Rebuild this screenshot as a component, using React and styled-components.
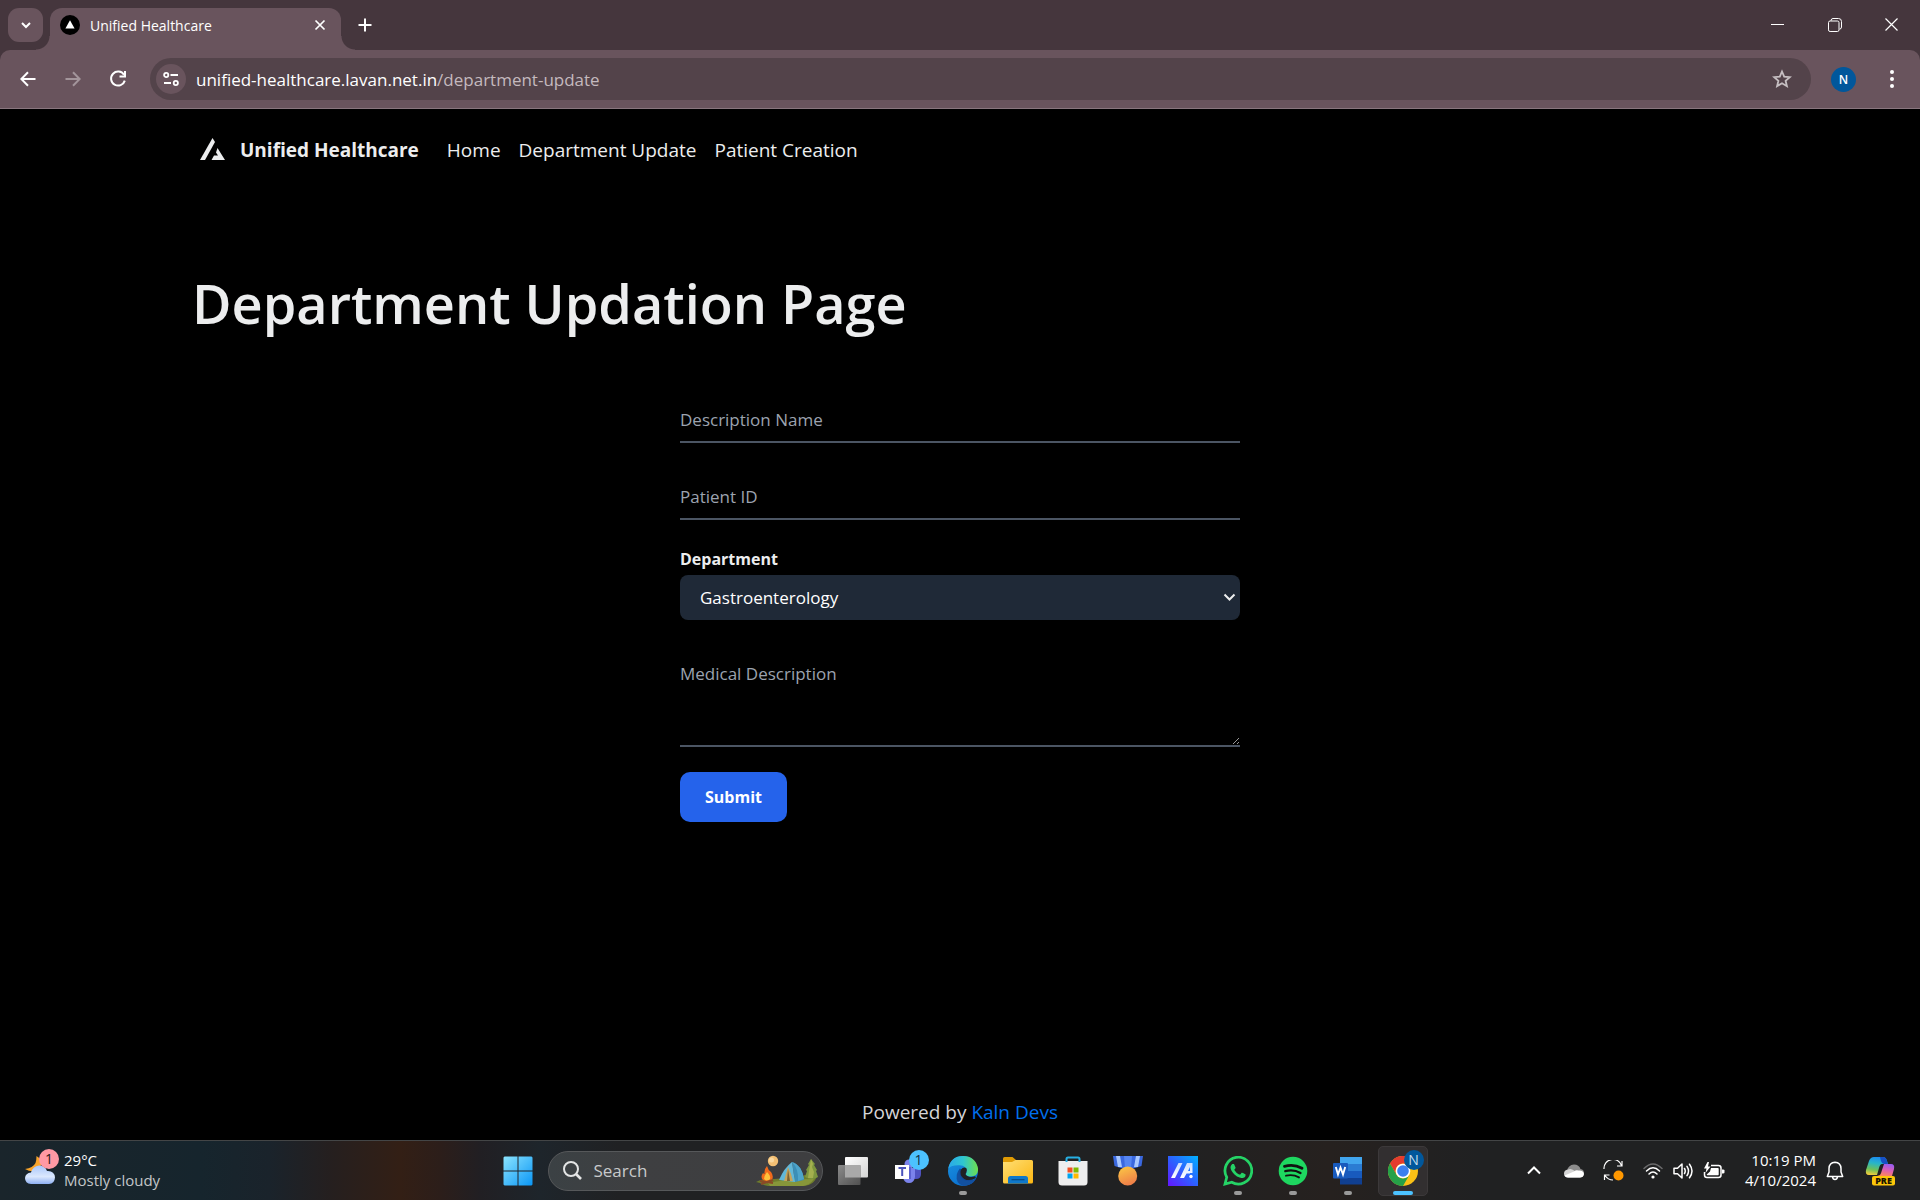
import React from "react";
import styled, { createGlobalStyle } from "styled-components";

const GlobalStyle = createGlobalStyle`
  *, *::before, *::after { box-sizing: border-box; }
  body {
    margin: 0;
    background: #000;
    color: #ecedee;
    font-family: "Open Sans", "Noto Sans", sans-serif;
    font-size: 17px;
  }
  button, input, select, textarea { font: inherit; color: inherit; }
  svg { display: block; flex: none; }
`;

const Desktop = styled.div`
  min-height: 100vh;
  display: flex;
  flex-direction: column;
`;

const IconButton = styled.button`
  display: grid;
  place-items: center;
  width: ${(p) => p.$width || 30}px;
  height: ${(p) => p.$height || 30}px;
  flex: none;
  padding: 0;
  border: 0;
  border-radius: ${(p) => p.$radius || 0}px;
  background: ${(p) => p.$background || "transparent"};
  color: ${(p) => p.$color || "#fff"};
`;

/* Browser frame */

const TabStrip = styled.div`
  display: flex;
  align-items: flex-end;
  height: 50px;
  padding-left: 8px;
  background: #45363d;
`;

const TabSearch = styled(IconButton)`
  margin-bottom: 8px;
`;

const Tab = styled.div`
  position: relative;
  display: flex;
  align-items: center;
  width: 291px;
  height: 42px;
  margin-left: 7px;
  padding: 0 11px 8px 10px;
  border-radius: 12px 12px 0 0;
  background: #69545d;
  color: #fff;
  font-size: 14px;

  &::before, &::after {
    content: "";
    position: absolute;
    bottom: 0;
    width: 14px;
    height: 14px;
  }
  &::before {
    right: 100%;
    background: radial-gradient(circle at 0 0, transparent 13px, #69545d 14px);
  }
  &::after {
    left: 100%;
    background: radial-gradient(circle at 100% 0, transparent 13px, #69545d 14px);
  }
`;

const TabTitle = styled.span`
  flex: 1;
  margin-left: 10px;
`;

const NewTab = styled(IconButton)`
  margin: 0 0 10px 9px;
`;

const WindowControls = styled.div`
  display: flex;
  align-self: stretch;
  margin-left: auto;
`;

const ToolbarBack = styled.div`
  background: #45363d;
`;

const Toolbar = styled.div`
  display: flex;
  align-items: center;
  gap: 15px;
  height: 59px;
  padding: 0 13px;
  border-bottom: 1px solid #89767e;
  border-radius: 10px 10px 0 0;
  background: #69545d;
`;

const AddressBar = styled.div`
  display: flex;
  flex: 1;
  align-items: center;
  height: 42px;
  margin-left: 2px;
  padding: 0 14px 0 6px;
  border-radius: 21px;
  background: #53434a;
`;

const Address = styled.span`
  flex: 1;
  margin-left: 10px;
  color: #fff;
  font-size: 17px;
`;

const AddressPath = styled.span`
  color: #c4b9be;
`;

const Avatar = styled(IconButton)`
  margin: 0 6px 0 5px;
  font-size: 12px;
  font-weight: 600;
`;

/* Web page */

const Page = styled.div`
  display: flex;
  flex: 1;
  flex-direction: column;
`;

const Container = styled.div`
  width: 100%;
  max-width: 1600px;
  margin: 0 auto;
  padding: 0 32px;
`;

const Nav = styled.nav`
  display: flex;
  align-items: center;
  height: 82px;
  padding-left: 8px;
  font-size: 19px;
`;

const Brand = styled.a`
  display: flex;
  align-items: center;
  gap: 15px;
  margin-right: 28px;
  color: inherit;
  font-weight: 700;
  text-decoration: none;
`;

const NavLinks = styled.div`
  display: flex;
  gap: 18px;
`;

const NavLink = styled.a`
  color: inherit;
  text-decoration: none;
`;

const Title = styled.h1`
  margin: 74px 0 58px;
  font-size: 54px;
  font-weight: 600;
  line-height: 76px;
`;

const Form = styled.form`
  display: flex;
  flex-direction: column;
  align-items: flex-start;
  max-width: 560px;
  margin: 0 auto;
`;

const Field = styled.div`
  display: grid;
  width: 100%;
  margin-bottom: ${(p) => p.$gap}px;
`;

const FloatingLabel = styled.label`
  grid-area: 1 / 1;
  line-height: 42px;
  color: #9ca3af;
  pointer-events: none;
  font-size: 17px;
`;

const TextInput = styled.input`
  grid-area: 1 / 1;
  width: 100%;
  height: ${(p) => p.$height || 44}px;
  padding: 0;
  border: 0;
  border-bottom: 2px solid #4b5563;
  border-radius: 0;
  outline: 0;
  background: transparent;
`;

const TextArea = styled(TextInput)`
  resize: vertical;
`;

const FieldLabel = styled.label`
  margin-bottom: 4px;
  font-size: 16px;
  font-weight: 700;
  line-height: 24px;
`;

const SelectBox = styled.div`
  display: grid;
  align-items: center;

  & > * { grid-area: 1 / 1; }
  & > svg { justify-self: end; margin-right: 4px; pointer-events: none; }
`;

const Select = styled.select`
  width: 100%;
  height: 45px;
  padding: 0 20px;
  border: 0;
  border-radius: 8px;
  appearance: none;
  background: #1f2937;
  color: #fff;
`;

const Submit = styled.button`
  height: 50px;
  padding: 0 25px;
  border: 0;
  border-radius: 10px;
  background: #2563eb;
  color: #fff;
  font-size: 16px;
  font-weight: 700;
`;

const Footer = styled.footer`
  margin-top: auto;
  padding-bottom: 12px;
  color: #d4d4d8;
  font-size: 19px;
  line-height: 32px;
  text-align: center;
`;

const FooterLink = styled.a`
  color: #006fee;
  text-decoration: none;
`;

/* Taskbar */

const Taskbar = styled.div`
  display: grid;
  grid-template-columns: 1fr auto 1fr;
  align-items: center;
  height: 60px;
  border-top: 1px solid #434546;
  background: linear-gradient(90deg, #1a252b 0, #16252d 200px, #1a232b 270px, #251f1f 330px, #331f15 400px, #2c1e1a 440px, #211f23 480px, #1e252b 540px, #202123 620px, #202122 1150px, #26211f 1330px, #202122 1480px);
  color: #fff;
`;

const Weather = styled.button`
  display: flex;
  align-items: center;
  gap: 9px;
  padding: 0 0 0 25px;
  border: 0;
  background: none;
  font-size: 15px;
  line-height: 20px;
  text-align: left;
`;

const WeatherText = styled.span`
  display: flex;
  flex-direction: column;
  padding-bottom: 2px;
`;

const Muted = styled.span`
  color: #c3c6c8;
`;

const Apps = styled.div`
  display: flex;
  align-items: center;
  gap: 5px;
`;

const AppButton = styled.button`
  position: relative;
  display: grid;
  place-items: center;
  width: 50px;
  height: 50px;
  padding: 0;
  border: 1px solid ${(p) => (p.$active ? "#3c393a" : "transparent")};
  border-radius: 5px;
  background: ${(p) => (p.$active ? "#322f30" : "transparent")};

  &::after {
    content: "";
    position: absolute;
    bottom: 0;
    left: 50%;
    display: ${(p) => (p.$open || p.$active ? "block" : "none")};
    width: ${(p) => (p.$active ? 20 : 8)}px;
    height: 4px;
    border-radius: 2px;
    background: ${(p) => (p.$active ? "#4cc2ff" : "#9a9a9a")};
    translate: -50% 0;
  }
`;

const Badge = styled.span`
  position: absolute;
  top: ${(p) => p.$top}px;
  right: ${(p) => p.$right}px;
  display: grid;
  place-items: center;
  width: 20px;
  height: 20px;
  border-radius: 50%;
  background: ${(p) => p.$background};
  color: ${(p) => p.$color};
  font-size: 14px;
  line-height: 20px;
`;

const SearchBox = styled.label`
  display: flex;
  align-items: center;
  width: 275px;
  height: 40px;
  padding: 0 4px 0 14px;
  border: 1px solid #56585a;
  border-radius: 20px;
  background: linear-gradient(90deg, #3b4144, #3e3f41 30%, #3e3e40);
`;

const SearchInput = styled.input`
  flex: 1;
  min-width: 0;
  margin-left: 12px;
  padding: 0;
  border: 0;
  outline: 0;
  background: none;
  color: #c8cacb;

  &::placeholder { color: #c8cacb; opacity: 1; }
`;

const WeatherIcon = styled.span`
  position: relative;
`;

const Tray = styled.div`
  display: flex;
  align-items: center;
  justify-content: flex-end;
  padding-right: 4px;
`;

const QuickSettings = styled.button`
  display: flex;
  align-items: center;
  gap: 10px;
  margin: 0 20px 0 10px;
  padding: 0;
  border: 0;
  background: none;
`;

const Clock = styled.button`
  margin-right: 10px;
  padding: 0 0 2px;
  border: 0;
  background: none;
  font-size: 15px;
  line-height: 20px;
  text-align: right;
`;

const Line = styled.span`
  display: block;
`;

function Stroke({ w, h, d, width = 2, children }) {
  return (
    <svg width={w} height={h} viewBox={`0 0 ${w} ${h}`} fill="none" stroke="currentColor" strokeWidth={width} aria-hidden="true">
      {d && <path d={d} />}
      {children}
    </svg>
  );
}

function Browser() {
  return (
    <header>
      <TabStrip>
        <TabSearch $width={35} $height={34} $radius={11} $background="#69545d" aria-label="Search tabs">
          <Stroke w={12} h={8} d="M2 2L6 6L10 2" />
        </TabSearch>
        <Tab>
          <svg width="20" height="20" viewBox="0 0 20 20" aria-hidden="true">
            <circle cx="10" cy="10" r="10" fill="#000" />
            <path d="M10 5.2L14.6 13.6H5.4Z" fill="#fff" />
          </svg>
          <TabTitle>Unified Healthcare</TabTitle>
          <IconButton $width={20} $height={20} aria-label="Close tab">
            <Stroke w={12} h={12} d="M1.5 1.5L10.5 10.5M10.5 1.5L1.5 10.5" width={1.7} />
          </IconButton>
        </Tab>
        <NewTab aria-label="New tab">
          <Stroke w={14} h={14} d="M7 .5V13.5M.5 7H13.5" />
        </NewTab>
        <WindowControls>
          <IconButton $width={57} $height={49} aria-label="Minimize">
            <Stroke w={13} h={13} d="M0 6.5H13" width={1} />
          </IconButton>
          <IconButton $width={57} $height={49} aria-label="Restore">
            <Stroke w={14} h={14} width={1}>
              <rect x=".5" y="3" width="10.5" height="10.5" rx="1.6" />
              <path d="M3 3V2.500Q3.200 .5 5 .5H10.500Q13.500 .5 13.500 3.500V9Q13.500 11 11.500 11.200" />
            </Stroke>
          </IconButton>
          <IconButton $width={57} $height={49} aria-label="Close">
            <Stroke w={13} h={13} d="M.5 .5L12.5 12.5M12.5 .5L.5 12.5" width={1.2} />
          </IconButton>
        </WindowControls>
      </TabStrip>
      <ToolbarBack>
        <Toolbar>
          <IconButton aria-label="Back">
            <Stroke w={16} h={16} d="M15.500 8H1.500M8 1.200L1.300 8L8 14.800" />
          </IconButton>
          <IconButton $color="#a3959b" aria-label="Forward">
            <Stroke w={16} h={16} d="M.5 8H14.500M8 1.200L14.700 8L8 14.800" />
          </IconButton>
          <IconButton aria-label="Reload">
            <Stroke w={18} h={18} d="M15 4.800A7 7 0 1 0 15.800 10.600M16 1V6.500H10.500" />
          </IconButton>
          <AddressBar>
            <IconButton $radius={15} $background="#69545d" aria-label="Site information">
              <Stroke w={16} h={14} width={1.800}>
                <circle cx="3.200" cy="3" r="2.100" />
                <path d="M7.500 3H15M1 11H8" />
                <circle cx="12.800" cy="11" r="2.100" />
              </Stroke>
            </IconButton>
            <Address>
              unified-healthcare.lavan.net.in<AddressPath>/department-update</AddressPath>
            </Address>
            <IconButton $color="#c6bfc2" aria-label="Bookmark">
              <Stroke w={20} h={20} d="M10 2.500L12.200 7.600L17.800 8.100L13.600 11.800L14.900 17.200L10 14.300L5.100 17.200L6.400 11.800L2.200 8.100L7.800 7.600Z" width={1.800} />
            </IconButton>
          </AddressBar>
          <Avatar $width={25} $height={25} $radius={13} $background="#01579b" aria-label="Profile N">N</Avatar>
          <IconButton aria-label="Menu">
            <svg width="4" height="18" viewBox="0 0 4 18" fill="#fff" aria-hidden="true">
              <circle cx="2" cy="2" r="2" />
              <circle cx="2" cy="9" r="2" />
              <circle cx="2" cy="16" r="2" />
            </svg>
          </IconButton>
        </Toolbar>
      </ToolbarBack>
    </header>
  );
}

function DepartmentPage() {
  return (
    <Page>
      <Container>
        <Nav>
          <Brand href="#home">
            <svg width="25" height="24" viewBox="0 0 25 24" fill="currentColor" aria-hidden="true">
              <path d="M12.500 0L15 4L5 22H0Z" />
              <path d="M17.500 10L25 22H11.500L14 17.500H18L16 14.500Z" />
            </svg>
            Unified Healthcare
          </Brand>
          <NavLinks>
            <NavLink href="#home">Home</NavLink>
            <NavLink href="#department-update">Department Update</NavLink>
            <NavLink href="#patient-creation">Patient Creation</NavLink>
          </NavLinks>
        </Nav>
        <Title>Department Updation Page</Title>
        <Form onSubmit={(e) => e.preventDefault()}>
          <Field $gap={33}>
            <TextInput id="description-name" />
            <FloatingLabel htmlFor="description-name">Description Name</FloatingLabel>
          </Field>
          <Field $gap={27}>
            <TextInput id="patient-id" />
            <FloatingLabel htmlFor="patient-id">Patient ID</FloatingLabel>
          </Field>
          <Field $gap={33}>
            <FieldLabel htmlFor="department">Department</FieldLabel>
            <SelectBox>
              <Select id="department" defaultValue="Gastroenterology">
                <option>Gastroenterology</option>
              </Select>
              <Stroke w={13} h={9} d="M1.500 1.500L6.500 6.500L11.500 1.500" />
            </SelectBox>
          </Field>
          <Field $gap={25}>
            <TextArea as="textarea" id="medical-description" $height={94} />
            <FloatingLabel htmlFor="medical-description">Medical Description</FloatingLabel>
          </Field>
          <Submit type="submit">Submit</Submit>
        </Form>
      </Container>
      <Footer>
        Powered by <FooterLink href="#kaln-devs">Kaln Devs</FooterLink>
      </Footer>
    </Page>
  );
}

const StartIcon = () => (
  <svg width="30" height="30" viewBox="0 0 30 30" aria-hidden="true">
    <defs>
      <linearGradient id="start" x1="0" y1="0" x2="1" y2="1" gradientUnits="objectBoundingBox">
        <stop offset="0" stopColor="#8be4ff" />
        <stop offset="1" stopColor="#0a96f5" />
      </linearGradient>
    </defs>
    <path fill="url(#start)" d="M1.500 .5H14.500V14.500H.5V1.500ZM15.500 .5H28.500L29.500 1.500V14.500H15.500ZM.5 15.500H14.500V29.500H1.500L.5 28.500ZM15.500 15.500H29.500V28.500L28.500 29.500H15.500Z" />
  </svg>
);

const CampIcon = () => (
  <svg width="62" height="32" viewBox="0 0 62 32" aria-hidden="true">
    <path d="M0 27Q8 23 18 24L44 22Q54 17 61 19Q60 30 47 31H12Q6 30 4 28Z" fill="#6f7d2c" />
    <path d="M12 28Q30 24 58 24Q54 30 47 31H14Z" fill="#87963a" />
    <circle cx="17" cy="6" r="5.200" fill="#f4c074" />
    <circle cx="15.500" cy="5" r="2.500" fill="#fbd9a0" />
    <path d="M55 4L59 9L58 10L61 15L60 16L62 22Q56 26 49 22L51 16L50 15L53 10L52 9Z" fill="#7d963e" />
    <path d="M55 4L57 9L56 12L58 17L57 23H52L53 16Z" fill="#a4b04e" />
    <path d="M36 7Q45 9 48 25L39 27Z" fill="#3b8fb8" />
    <path d="M36 7Q28 13 23 25L39 27Z" fill="#62b7d8" />
    <path d="M36 7Q43 14 42 26L48 24Q46 10 36 7Z" fill="#4ea4ca" />
    <path d="M32 12L28 26H37Q35 18 32 12Z" fill="#c7a45b" />
    <path d="M32 14L31 26H34Z" fill="#7c6131" />
    <path d="M11 11Q12 15 15 17Q18 21 16 25Q12 28 7 25Q4 22 7 18Q8 19 8.500 19Q8 14 11 11Z" fill="#f26a1b" />
    <path d="M11 17Q15 21 14 24Q11 27 8 24Q8 21 11 17Z" fill="#ffc23b" />
    <path d="M4 26L17 28M5 29L17 25" stroke="#8a4a26" strokeWidth="2" />
  </svg>
);

const TaskViewIcon = () => (
  <svg width="30" height="28" viewBox="0 0 30 28" aria-hidden="true">
    <defs>
      <linearGradient id="tv1" x1="0" y1="0" x2="1" y2="1"><stop stopColor="#fff" /><stop offset="1" stopColor="#d4d4d4" /></linearGradient>
      <linearGradient id="tv2" x1="0" y1="0" x2="1" y2="1"><stop stopColor="#8b8b8b" /><stop offset="1" stopColor="#505050" /></linearGradient>
    </defs>
    <rect x="7" y="0" width="23" height="20.500" rx="1" fill="url(#tv1)" />
    <rect x="0" y="8" width="22.500" height="20" rx="1" fill="url(#tv2)" />
    <rect x="7" y="8" width="15.500" height="12.500" fill="#a9a9a9" />
  </svg>
);

const TeamsIcon = () => (
  <svg width="30" height="30" viewBox="0 0 30 30" aria-hidden="true">
    <circle cx="16" cy="8" r="4.500" fill="#7b83eb" />
    <path d="M19 12H28V18Q28 23 23 23H19Z" fill="#4e52c0" />
    <path d="M10 12H22V21Q21 27 16 27Q11 27 10 21Z" fill="#7b83eb" />
    <path d="M11 11H18V23H11Z" fill="#5a60cf" />
    <rect x="2" y="9" width="14" height="14" fill="#fff" />
    <path d="M5.500 12H13M9.200 12V20" stroke="#4b53bc" strokeWidth="2" />
  </svg>
);

const EdgeIcon = () => (
  <svg width="30" height="30" viewBox="0 0 24 24" aria-hidden="true">
    <defs>
      <linearGradient id="e1" x1="0" y1=".3" x2="1" y2=".3"><stop stopColor="#2aa8ea" /><stop offset=".5" stopColor="#2fc6d0" /><stop offset="1" stopColor="#6ee04b" /></linearGradient>
      <linearGradient id="e2" x1="0" y1="0" x2=".6" y2="1"><stop stopColor="#1b93e0" /><stop offset="1" stopColor="#0a6fcf" /></linearGradient>
    </defs>
    <circle cx="12" cy="12" r="12" fill="url(#e2)" />
    <path d="M.3 10Q2 0 12 0Q22 0 24 10Q24.500 16.500 17.500 16.300Q13.500 16 14.600 13.600Q16 8 9.500 7.400Q3 7 .3 10Z" fill="url(#e1)" />
    <path d="M9.500 10Q6 14 9 19Q13 25 19 22Q21 20.500 22.300 18.300Q18 20.300 14 18.200Q10 16 11 11Z" fill="#114a9b" />
    <path d="M14.600 9.500Q12 8.500 10.300 11Q8.700 15.500 13 18.300Q17 20.500 22 17.800Q22.800 16.500 21.500 16.200Q18 17.500 15.500 16Q13.200 14.800 14.600 13.300Q15.700 11 14.600 9.500Z" fill="#202123" />
    <path d="M9.500 11Q8 17 13.500 19.500Q18 21 22.300 18Q19 24 12 24Q6 22 7 15Q7.500 12 9.500 11Z" fill="#12509f" />
  </svg>
);

const FolderIcon = () => (
  <svg width="30" height="27" viewBox="0 0 30 27" aria-hidden="true">
    <defs>
      <linearGradient id="f1" x1="0" y1="0" x2="1" y2="1"><stop stopColor="#ffdf75" /><stop offset="1" stopColor="#fbb612" /></linearGradient>
    </defs>
    <path d="M0 1.500Q0 0 1.500 0H9.500L13 3V9H0Z" fill="#e09b04" />
    <path d="M0 5H9L12.500 3H28.500Q30 3 30 4.500V25Q30 26.500 28.500 26.500H1.500Q0 26.500 0 25Z" fill="url(#f1)" />
    <path d="M5 26.500V21.500Q5 19 7.500 19H22.500Q25 19 25 21.500V26.500Z" fill="#0f78ca" />
    <path d="M8.500 22.700H21.500" stroke="#094a83" strokeWidth="1.200" />
  </svg>
);

const StoreIcon = () => (
  <svg width="30" height="30" viewBox="0 0 30 30" aria-hidden="true">
    <path d="M8.500 6V3Q8.500 1.500 10 1.500H20Q21.500 1.500 21.500 3V6" fill="none" stroke="#27b0e3" strokeWidth="2" />
    <path d="M.5 5H29.500V26Q29.500 29.500 26 29.500H4Q.5 29.500 .5 26Z" fill="#eee" />
    <path d="M8.500 5V6M21.500 5V6" stroke="#27b0e3" strokeWidth="2" />
    <path d="M9.500 11.500H14.500V16.500H9.500Z" fill="#f25022" />
    <path d="M15.500 11.500H20.500V16.500H15.500Z" fill="#7fba00" />
    <path d="M9.500 17.500H14.500V22.500H9.500Z" fill="#00a4ef" />
    <path d="M15.500 17.500H20.500V22.500H15.500Z" fill="#ffb900" />
  </svg>
);

const MedalIcon = () => (
  <svg width="30" height="30" viewBox="0 0 30 30" aria-hidden="true">
    <defs>
      <linearGradient id="m1" x1="0" y1="0" x2=".4" y2="1"><stop stopColor="#fccb45" /><stop offset="1" stopColor="#ef8148" /></linearGradient>
    </defs>
    <path d="M0 0H30L28.500 10L19 13H11L1.500 10Z" fill="#3a68df" />
    <path d="M3 0H7L9 11L5 11Z" fill="#a9c8ff" />
    <path d="M27 0H23L21 11L25 11Z" fill="#a9c8ff" />
    <path d="M11 0H19L18 12H12Z" fill="#5686f2" />
    <circle cx="14.700" cy="20" r="9.500" fill="url(#m1)" />
  </svg>
);

const ArmouryIcon = () => (
  <svg width="30" height="30" viewBox="0 0 30 30" aria-hidden="true">
    <defs>
      <linearGradient id="a1" x1="0" y1="1" x2="1" y2="0"><stop stopColor="#6415ff" /><stop offset=".5" stopColor="#2c61ff" /><stop offset="1" stopColor="#00b2ff" /></linearGradient>
      <linearGradient id="a2" x1="0" y1="1" x2="0" y2="0"><stop stopColor="#fff" /><stop offset="1" stopColor="#c9dcff" /></linearGradient>
    </defs>
    <rect width="30" height="30" fill="url(#a1)" />
    <path d="M10.500 7H14.500L7 22H3ZM19 7H24.500V17H22V11L20 15H22V17.500H18.500L16 22H12Z" fill="url(#a2)" />
    <circle cx="23" cy="20.500" r="1.700" fill="#fff" />
  </svg>
);

const WhatsAppIcon = () => (
  <svg width="30" height="30" viewBox="0 0 24 24" fill="#25d366" aria-hidden="true">
    <path d="M17.472 14.382c-.297-.149-1.758-.867-2.030-.967-.273-.099-.471-.148-.670.150-.197.297-.767.966-.940 1.164-.173.199-.347.223-.644.075-.297-.150-1.255-.463-2.390-1.475-.883-.788-1.480-1.761-1.653-2.059-.173-.297-.018-.458.130-.606.134-.133.298-.347.446-.520.149-.174.198-.298.298-.497.099-.198.050-.371-.025-.520-.075-.149-.669-1.612-.916-2.207-.242-.579-.487-.500-.669-.510-.173-.008-.371-.010-.570-.010-.198 0-.520.074-.792.372-.272.297-1.040 1.016-1.040 2.479 0 1.462 1.065 2.875 1.213 3.074.149.198 2.096 3.200 5.077 4.487.709.306 1.262.489 1.694.625.712.227 1.360.195 1.871.118.571-.085 1.758-.719 2.006-1.413.248-.694.248-1.289.173-1.413-.074-.124-.272-.198-.570-.347" />
    <path fill="none" stroke="#25d366" strokeWidth="2.200" d="M1.600 22.400L3 17A10.700 10.700 0 1 1 7 21Z" />
  </svg>
);

const SpotifyIcon = () => (
  <svg width="30" height="30" viewBox="0 0 30 30" aria-hidden="true">
    <circle cx="15" cy="15" r="14.300" fill="#1ed760" />
    <g fill="none" stroke="#111" strokeLinecap="round">
      <path d="M6.500 10.300Q16 7.700 24 12.300" strokeWidth="2.800" />
      <path d="M7.300 15.200Q15.500 13 22.500 17" strokeWidth="2.300" />
      <path d="M8 19.700Q15 18 21 21.400" strokeWidth="1.900" />
    </g>
  </svg>
);

const WordIcon = () => (
  <svg width="30" height="28" viewBox="0 0 30 28" aria-hidden="true">
    <path d="M7 0H29V7H7Z" fill="#41a5ee" />
    <path d="M7 7H29V14H7Z" fill="#2b7cd3" />
    <path d="M7 14H29V21H7Z" fill="#185abd" />
    <path d="M7 21H29V27.500H7Z" fill="#103f91" />
    <rect x="0" y="6" width="15" height="15.500" rx="1" fill="#185abd" />
    <path d="M2.800 10L5 17.500L7.500 10.500L10 17.500L12.200 10" fill="none" stroke="#fff" strokeWidth="1.900" />
  </svg>
);

const ChromeIcon = () => (
  <svg width="30" height="30" viewBox="0 0 30 30" aria-hidden="true">
    <circle cx="15" cy="15" r="15" fill="#fbc116" />
    <path d="M2 7.500A15 15 0 0 1 28 7.500H15A7.500 7.500 0 0 0 8.500 18.700Z" fill="#e33b2e" />
    <path d="M2 7.500A15 15 0 0 0 15 30L21.500 18.700A7.500 7.500 0 0 1 8.500 18.700Z" fill="#26a148" />
    <circle cx="15" cy="15" r="7.300" fill="#fff" />
    <circle cx="15" cy="15" r="5.800" fill="#3b7ff0" />
  </svg>
);

const apps = [
  { name: "Task view", Icon: TaskViewIcon },
  { name: "Teams", Icon: TeamsIcon, badge: { text: "1", background: "#4cc2ff", color: "#12303f" } },
  { name: "Edge", Icon: EdgeIcon, open: true },
  { name: "File Explorer", Icon: FolderIcon },
  { name: "Store", Icon: StoreIcon },
  { name: "Rewards", Icon: MedalIcon },
  { name: "Armoury", Icon: ArmouryIcon },
  { name: "WhatsApp", Icon: WhatsAppIcon, open: true },
  { name: "Spotify", Icon: SpotifyIcon, open: true },
  { name: "Word", Icon: WordIcon, open: true },
  { name: "Chrome", Icon: ChromeIcon, active: true, badge: { text: "N", background: "#01579b", color: "#c5dcec" } },
];

function SystemTaskbar() {
  return (
    <Taskbar>
      <Weather>
        <WeatherIcon>
          <svg width="30" height="32" viewBox="0 0 30 32" aria-hidden="true">
            <defs>
              <linearGradient id="cl" x1="0" y1="0" x2="0" y2="1"><stop stopColor="#a9c6fa" /><stop offset=".6" stopColor="#dbe8fd" /><stop offset="1" stopColor="#8eb0f2" /></linearGradient>
            </defs>
            <path d="M11.500 1Q19 5 15 13Q9 19 0 14Q8 13 10.500 8Q11.500 5 11.500 1Z" fill="#f9a52b" />
            <path d="M6 29Q0 28.500 0 23Q.5 18 6 17.500Q8 11 14 10.500Q20 10.500 22 16Q29.500 15.500 30 22.500Q29.500 29 24 29Z" fill="url(#cl)" />
          </svg>
          <Badge $top={-6} $right={-4} $background="#ff99a4" $color="#2b1719">1</Badge>
        </WeatherIcon>
        <WeatherText>
          <span>29°C</span>
          <Muted>Mostly cloudy</Muted>
        </WeatherText>
      </Weather>
      <Apps>
        <AppButton aria-label="Start"><StartIcon /></AppButton>
        <SearchBox>
          <svg width="19" height="19" viewBox="0 0 19 19" fill="none" stroke="#e4e5e5" strokeWidth="2" aria-hidden="true">
            <circle cx="8" cy="8" r="7" />
            <path d="M13 13L18 18" strokeWidth="2.600" />
          </svg>
          <SearchInput placeholder="Search" aria-label="Search" />
          <CampIcon />
        </SearchBox>
        {apps.map(({ name, Icon, open, active, badge }) => (
          <AppButton key={name} aria-label={name} $open={open} $active={active}>
            <Icon />
            {badge && (
              <Badge $top={3} $right={3} $background={badge.background} $color={badge.color}>{badge.text}</Badge>
            )}
          </AppButton>
        ))}
      </Apps>
      <Tray>
        <IconButton $width={38} aria-label="Hidden icons">
          <Stroke w={14} h={9} d="M1 7.500L7 1.500L13 7.500" />
        </IconButton>
        <IconButton $width={42} aria-label="OneDrive">
          <svg width="20" height="14" viewBox="0 0 20 14" aria-hidden="true">
            <path d="M3 7Q4 1 10 .5Q15 .5 16.500 5Q20 5.500 20 9Q20 13 16 13L4 12Z" fill="#8c8c8c" />
            <path d="M4 13.500Q0 13.300 0 9.500Q0 6 4 5.500Q7 4 10 6.500L19 11Q18 13.500 16 13.500Z" fill="#d5d5d5" />
            <path d="M4 13.500Q1.500 13.500 .5 11.500L10 7.500Q12 5.500 14.500 6.500Q19.500 6 20 10Q19.500 13.500 16 13.500Z" fill="#fff" />
          </svg>
        </IconButton>
        <IconButton $width={38} aria-label="Windows Update">
          <svg width="22" height="22" viewBox="0 0 22 22" fill="none" stroke="#fff" strokeWidth="1.200" aria-hidden="true">
            <path d="M1 9A9 9 0 0 1 18.500 5.500M19 1V6H14M1.500 20V15H6.500M2 15.500Q5 20 10 20" />
            <circle cx="15.500" cy="15.500" r="5" fill="#ff9800" stroke="none" />
          </svg>
        </IconButton>
        <QuickSettings aria-label="Network, volume and battery">
          <svg width="20" height="18" viewBox="0 0 20 18" fill="none" stroke="#fff" strokeWidth="1.500" strokeLinecap="round" aria-hidden="true">
            <path d="M1 6.500Q10 -2.500 19 6.500" stroke="#6b6b6c" />
            <path d="M3.500 9Q10 2.500 16.500 9M6 12Q10 8 14 12" />
            <circle cx="10" cy="15" r="1.600" fill="#fff" stroke="none" />
          </svg>
          <svg width="20" height="18" viewBox="0 0 20 18" fill="none" stroke="#fff" strokeWidth="1.500" strokeLinejoin="round" strokeLinecap="round" aria-hidden="true">
            <path d="M1 6.300H4.500L9 2V16L4.500 11.700H1ZM11.500 6.500Q13 9 11.500 11.500M14 4.300Q17 9 14 13.700M16.500 2.200Q21.500 9 16.500 15.800" />
          </svg>
          <svg width="22" height="18" viewBox="0 0 22 18" aria-hidden="true">
            <path d="M8 3.500H15.500Q18 3.500 18 6V13Q18 15.500 15.500 15.500H4Q1.500 15.500 1.500 13V10" fill="none" stroke="#fff" strokeWidth="1.500" />
            <path d="M8 6H15Q15.700 6 15.700 6.700V12.500Q15.700 13.300 15 13.300H4.500Q3.700 13.300 3.700 12.500L7 9.500Z" fill="#fff" />
            <path d="M19 7.500H20Q21.500 7.500 21.500 8.500V10.500Q21.500 11.500 20 11.500H19Z" fill="#fff" />
            <path d="M4.500 0L1 6.500H3.500L2.500 11L7.500 4.500H5L6 0Z" fill="#fff" />
          </svg>
        </QuickSettings>
        <Clock>
          <Line>10:19 PM</Line>
          <Line>4/10/2024</Line>
        </Clock>
        <IconButton $width={18} aria-label="Notifications">
          <svg width="18" height="20" viewBox="0 0 18 20" fill="none" stroke="#fff" strokeWidth="1.500" strokeLinejoin="round" aria-hidden="true">
            <path d="M9 1.200Q14.800 1.500 15 7.500V11L16.700 15.500H1.300L3 11V7.500Q3.200 1.500 9 1.200ZM6.500 15.800Q7 18.500 9 18.500Q11 18.500 11.500 15.800" />
          </svg>
        </IconButton>
        <IconButton $width={72} aria-label="Copilot preview">
          <svg width="30" height="30" viewBox="0 0 30 30" aria-hidden="true">
            <defs>
              <linearGradient id="c1" x1=".5" y1="0" x2=".3" y2="1"><stop stopColor="#1c8df0" /><stop offset=".35" stopColor="#28b5c8" /><stop offset=".7" stopColor="#6cc05a" /><stop offset="1" stopColor="#f2cc3b" /></linearGradient>
              <linearGradient id="c2" x1=".6" y1="0" x2=".3" y2="1"><stop stopColor="#9a5cf0" /><stop offset=".5" stopColor="#e060b0" /><stop offset="1" stopColor="#ff8a55" /></linearGradient>
            </defs>
            <path d="M9 1H18Q21 1 22 5L23 8H17Q15 8 14 12L12 19H4Q0 19 1 14L4 5Q5.500 1 9 1Z" fill="url(#c1)" />
            <path d="M15 1H18Q21 1 22 5L23 8H19Q17 8 16 5Z" fill="#1750c4" />
            <path d="M19 8H26Q30 8 29 13L27 20H12L15 19Q16 18 17 14Z" fill="url(#c2)" />
            <rect x="7" y="20" width="23" height="9.500" rx="2" fill="#fcc60a" />
            <text x="18.500" y="28" textAnchor="middle" fontSize="9" fontWeight="800" fontFamily="Open Sans, sans-serif" fill="#1b1600">PRE</text>
          </svg>
        </IconButton>
      </Tray>
    </Taskbar>
  );
}

export default function App() {
  return (
    <Desktop>
      <GlobalStyle />
      <Browser />
      <DepartmentPage />
      <SystemTaskbar />
    </Desktop>
  );
}
